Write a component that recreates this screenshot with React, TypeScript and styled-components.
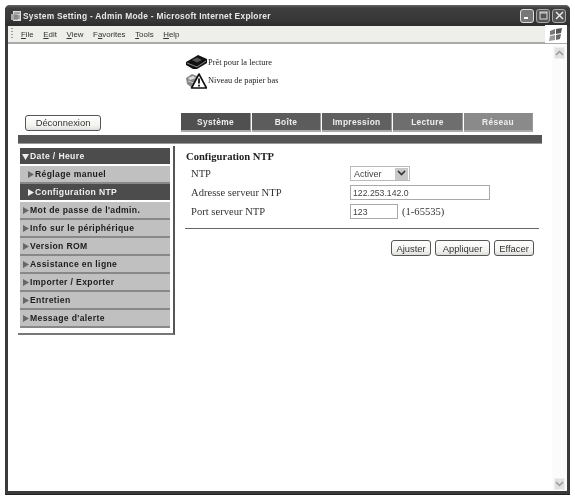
import React from "react";
import styled, { createGlobalStyle } from "styled-components";

const Global = createGlobalStyle`
  html, body { margin: 0; padding: 0; background: #fff; width: 575px; height: 499px; overflow: hidden; }
  #root { width: 575px; height: 499px; padding: 5px 5px 0 5px; box-sizing: border-box; filter: blur(0.4px); }
  * { box-sizing: border-box; }
`;

const Win = styled.div`
  width: 565px; height: 490px; display: flex; flex-direction: column;
  background: #3a3a3a; border-radius: 5px 5px 0 0; overflow: hidden;
  padding: 0 3px 3px 3px; border-bottom: 1px solid #222;
`;
const TitleBar = styled.div`
  height: 21px; flex: none; margin: 0 -3px; padding: 0 4px 0 6px; display: flex; align-items: center; gap: 1px;
  background: linear-gradient(#666 0, #3e3e3e 3px, #383838 14px, #2c2c2c 100%);
`;
const TitleText = styled.span`
  font: bold 8.4px "Liberation Sans", sans-serif; color: #e8e8e8; letter-spacing: 0.27px; flex: 1; white-space: nowrap;
`;
const WinButtons = styled.div` display: flex; gap: 2px; `;
const WinBtn = styled.div<{ $light?: boolean }>`
  width: 14px; height: 14px; border: 1px solid ${p => p.$light ? "#ddd" : "#aaa"}; border-radius: 3px; background: ${p => p.$light ? "#777" : "#555"};
  display: flex; align-items: center; justify-content: center;
`;
const MenuBar = styled.div`
  height: 18px; flex: none; background: #eeeeea; border-bottom: 2px solid #aaa; display: flex; align-items: center; padding: 0 0 0 3px; position: relative;
`;
const Grip = styled.div` width: 2px; height: 12px; margin-right: 8px; background: repeating-linear-gradient(#999 0 1px, transparent 1px 3px); `;
const MenuItem = styled.span`
  font: 7.9px "Liberation Sans", sans-serif; color: #333; margin-right: 9.6px;
  u { text-decoration: underline; }
`;
const Flag = styled.div`
  position: absolute; right: 0; top: -1px; width: 22px; height: 18px; background: #fff; display: flex; align-items: center; justify-content: center;
`;
const Viewport = styled.div` flex: 1; display: flex; background: #fff; min-height: 0; `;
const Page = styled.div` width: 544px; flex: none; display: flex; flex-direction: column; padding-left: 10px; `;
const Scrollbar = styled.div`
  flex: 1; background: #fbfbfb; display: flex; flex-direction: column; justify-content: space-between; padding: 3px 0 1px 0; align-items: center;
`;
const ScrollBtn = styled.div`
  width: 11px; height: 12px; background: #e0e0e0; border: 1px solid #eee; display: flex; align-items: center; justify-content: center;
`;
const Status = styled.div` height: 47px; padding: 11px 0 0 168px; display: flex; flex-direction: column; gap: 3px; `;
const StatusRow = styled.div` display: flex; align-items: center; gap: 1px; height: 15px; `;
const StatusText = styled.span` font: 8.4px "Liberation Serif", serif; color: #222; white-space: nowrap; `;
const NavRow = styled.div` margin-top: 22px; height: 19px; display: flex; align-items: center; `;
const LogoutSlot = styled.div` width: 163px; padding-left: 7px; flex: none; display: flex; `;
const Btn = styled.button<{ $w: number }>`
  width: ${p => p.$w}px; height: 16px; padding: 0; background: linear-gradient(#fff, #f2f2ee 70%, #ddd);
  border: 1px solid #555; border-radius: 3px; font: 9.4px "Liberation Sans", sans-serif; color: #333;
`;
const Tabs = styled.div` display: flex; gap: 1px; height: 19px; `;
const Tab = styled.div<{ $bg: string; $w: number }>`
  width: ${p => p.$w}px; height: 19px; background: ${p => p.$bg}; border-right: 1px solid #999; border-bottom: 2px solid #aaa;
  font: bold 8.4px "Liberation Sans", sans-serif; letter-spacing: 0.35px; color: #eee; display: flex; align-items: center; justify-content: center;
`;
const Rule = styled.div` margin-top: 3px; height: 9px; width: 524px; background: #555; border-bottom: 1px solid #999; `;
const Main = styled.div` display: flex; margin-top: 2px; `;
const Side = styled.div`
  width: 157px; height: 189px; flex: none; border-right: 2px solid #555; border-bottom: 2px solid #777; padding: 2px 3px 0 2px;
  display: flex; flex-direction: column;
`;
const NavItem = styled.div<{ $dark?: boolean; $sub?: boolean }>`
  height: 18px; flex: none; background: ${p => p.$dark ? "#4c4c4c" : "#c0c0c0"}; border-bottom: 2px solid ${p => p.$dark ? "#fff" : "#888"};
  color: ${p => p.$dark ? "#eee" : "#1c1c1c"}; padding-left: ${p => p.$sub ? 7 : 2}px;
  font: bold 8.6px "Liberation Sans", sans-serif; letter-spacing: 0.37px; display: flex; align-items: center; gap: 1px; white-space: nowrap;
`;
const Form = styled.div` flex: 1; padding: 3px 0 0 11px; width: 364px; `;
const FormTitle = styled.div` font: bold 10.6px "Liberation Serif", serif; color: #222; height: 15px; display: flex; align-items: center; `;
const Row = styled.div` display: grid; grid-template-columns: 159px auto; align-items: center; height: 19px; padding-left: 5px; `;
const Label = styled.span` font: 10.6px "Liberation Serif", serif; color: #333; `;
const Field = styled.div` display: flex; align-items: center; gap: 4px; `;
const Input = styled.input<{ $w: number }>`
  width: ${p => p.$w}px; height: 15px; border: 1px solid #aaa; padding: 0 2px; font: 8.7px "Liberation Sans", sans-serif; color: #444; outline: none;
`;
const Select = styled.div`
  width: 60px; height: 15px; border: 1px solid #bbb; display: flex; align-items: center; justify-content: space-between; padding: 0 1px 0 3px;
  font: 9px "Liberation Sans", sans-serif; color: #444;
`;
const Caret = styled.div` width: 13px; height: 12px; background: #c8c8c8; display: flex; align-items: center; justify-content: center; `;
const Range = styled.span` font: 10.6px "Liberation Serif", serif; color: #333; `;
const Hr = styled.div` height: 1px; border-top: 1px solid #666; width: 354px; margin: 7px 0 0 -1px; `;
const Actions = styled.div` display: flex; margin-top: 11px; width: 348px; justify-content: flex-end; gap: 4px; `;

const Tri = ({ down, light }: { down?: boolean; light?: boolean }) => (
  <svg width="7" height="7" viewBox="0 0 7 7" style={{ flex: "none" }}>
    <path d={down ? "M0 1h7L3.5 7z" : "M1 0l6 3.5L1 7z"} fill={light ? "#eee" : "#666"} />
  </svg>
);

const Printer = () => (
  <svg width="21" height="15" viewBox="0 0 21 15">
    <path d="M0 7 L7 3 L12 0 L21 4 L21 8 L11 14 L7 14 L0 10Z" fill="#111" />
    <path d="M1 8 L11 12 L20 6" stroke="#888" strokeWidth="1" fill="none" />
    <path d="M6 5 L11 2.5 L16 5 L11 7.5Z" fill="#555" />
  </svg>
);
const WarnPrinter = () => (
  <svg width="21" height="16" viewBox="0 0 21 16">
    <path d="M0 5 L6 1 L11 3 L11 13 L5 14 L1 11Z" fill="#888" />
    <path d="M2 5 L7 3 L10 5 L4 7Z" fill="#ddd" />
    <path d="M2 8 L8 10" stroke="#ccc" fill="none" />
    <path d="M13 1 L20.5 15 L5.5 15Z" fill="#fff" stroke="#111" strokeWidth="1.6" strokeLinejoin="round" />
    <path d="M13 5.5 V10.5 M13 11.8 V13.4" stroke="#111" strokeWidth="1.8" />
  </svg>
);

const menus: [string, string][] = [["F", "ile"], ["E", "dit"], ["V", "iew"], ["", "Favorites"], ["T", "ools"], ["H", "elp"]];
const tabs = [
  { t: "Système", bg: "#505050", w: 70 }, { t: "Boîte", bg: "#5c5c5c", w: 69 }, { t: "Impression", bg: "#606060", w: 70 },
  { t: "Lecture", bg: "#6e6e6e", w: 70 }, { t: "Réseau", bg: "#8a8a8a", w: 69 },
];
const items = ["Mot de passe de l'admin.", "Info sur le périphérique", "Version ROM", "Assistance en ligne", "Importer / Exporter", "Entretien", "Message d'alerte"];

export default function App() {
  return (
    <>
      <Global />
      <Win>
        <TitleBar>
          <svg width="11" height="12" viewBox="0 0 11 12"><rect x="2" y="1" width="8" height="10" fill="#ddd" /><path d="M0 4h7v6H0z" fill="#aaa" /><path d="M3 3h6M3 6h6M3 8h6" stroke="#666" /></svg>
          <TitleText>System Setting - Admin Mode - Microsoft Internet Explorer</TitleText>
          <WinButtons>
            <WinBtn $light><svg width="8" height="8"><rect x="1" y="5" width="4" height="2" fill="#fff" /></svg></WinBtn>
            <WinBtn><svg width="9" height="9"><rect x="1" y="1" width="7" height="7" fill="none" stroke="#ddd" /><path d="M1 2h7" stroke="#ddd" /></svg></WinBtn>
            <WinBtn><svg width="9" height="9"><path d="M1 1l7 7M8 1l-7 7" stroke="#eee" strokeWidth="1.4" /></svg></WinBtn>
          </WinButtons>
        </TitleBar>
        <MenuBar>
          <Grip />
          {menus.map(([u, r]) => (
            <MenuItem key={r}>{r === "Favorites" ? <>F<u>a</u>vorites</> : <><u>{u}</u>{r}</>}</MenuItem>
          ))}
          <Flag>
            <svg width="14" height="13" viewBox="0 0 14 13"><path d="M1 3 L6 1 L6 6 L1 7Z" fill="#777" /><path d="M7 1 L13 0 L12 5 L7 6Z" fill="#555" /><path d="M1 8 L6 7 L6 12 L0 13Z" fill="#999" /><path d="M7 7 L12 6 L11 11 L7 12Z" fill="#666" /></svg>
          </Flag>
        </MenuBar>
        <Viewport>
          <Page>
            <Status>
              <StatusRow><Printer /><StatusText>Prêt pour la lecture</StatusText></StatusRow>
              <StatusRow><WarnPrinter /><StatusText>Niveau de papier bas</StatusText></StatusRow>
            </Status>
            <NavRow>
              <LogoutSlot><Btn $w={76}>Déconnexion</Btn></LogoutSlot>
              <Tabs>{tabs.map(t => <Tab key={t.t} $bg={t.bg} $w={t.w}>{t.t}</Tab>)}</Tabs>
            </NavRow>
            <Rule />
            <Main>
              <Side>
                <NavItem $dark><Tri down light />Date / Heure</NavItem>
                <NavItem $sub><Tri />Réglage manuel</NavItem>
                <NavItem $sub $dark><Tri light />Configuration NTP</NavItem>
                {items.map(i => <NavItem key={i}><Tri />{i}</NavItem>)}
              </Side>
              <Form>
                <FormTitle>Configuration NTP</FormTitle>
                <Row><Label>NTP</Label><Field><Select>Activer<Caret><svg width="9" height="7"><path d="M1 1l3.5 3.5L8 1" fill="none" stroke="#333" strokeWidth="1.6" /></svg></Caret></Select></Field></Row>
                <Row><Label>Adresse serveur NTP</Label><Field><Input $w={140} defaultValue="122.253.142.0" /></Field></Row>
                <Row><Label>Port serveur NTP</Label><Field><Input $w={48} defaultValue="123" /><Range>(1-65535)</Range></Field></Row>
                <Hr />
                <Actions><Btn $w={40}>Ajuster</Btn><Btn $w={55}>Appliquer</Btn><Btn $w={40}>Effacer</Btn></Actions>
              </Form>
            </Main>
          </Page>
          <Scrollbar>
            <ScrollBtn><svg width="9" height="6"><path d="M1 5l3.5-3.5L8 5" fill="none" stroke="#999" strokeWidth="1.5" /></svg></ScrollBtn>
            <ScrollBtn><svg width="9" height="6"><path d="M1 1l3.5 3.5L8 1" fill="none" stroke="#999" strokeWidth="1.5" /></svg></ScrollBtn>
          </Scrollbar>
        </Viewport>
      </Win>
    </>
  );
}
